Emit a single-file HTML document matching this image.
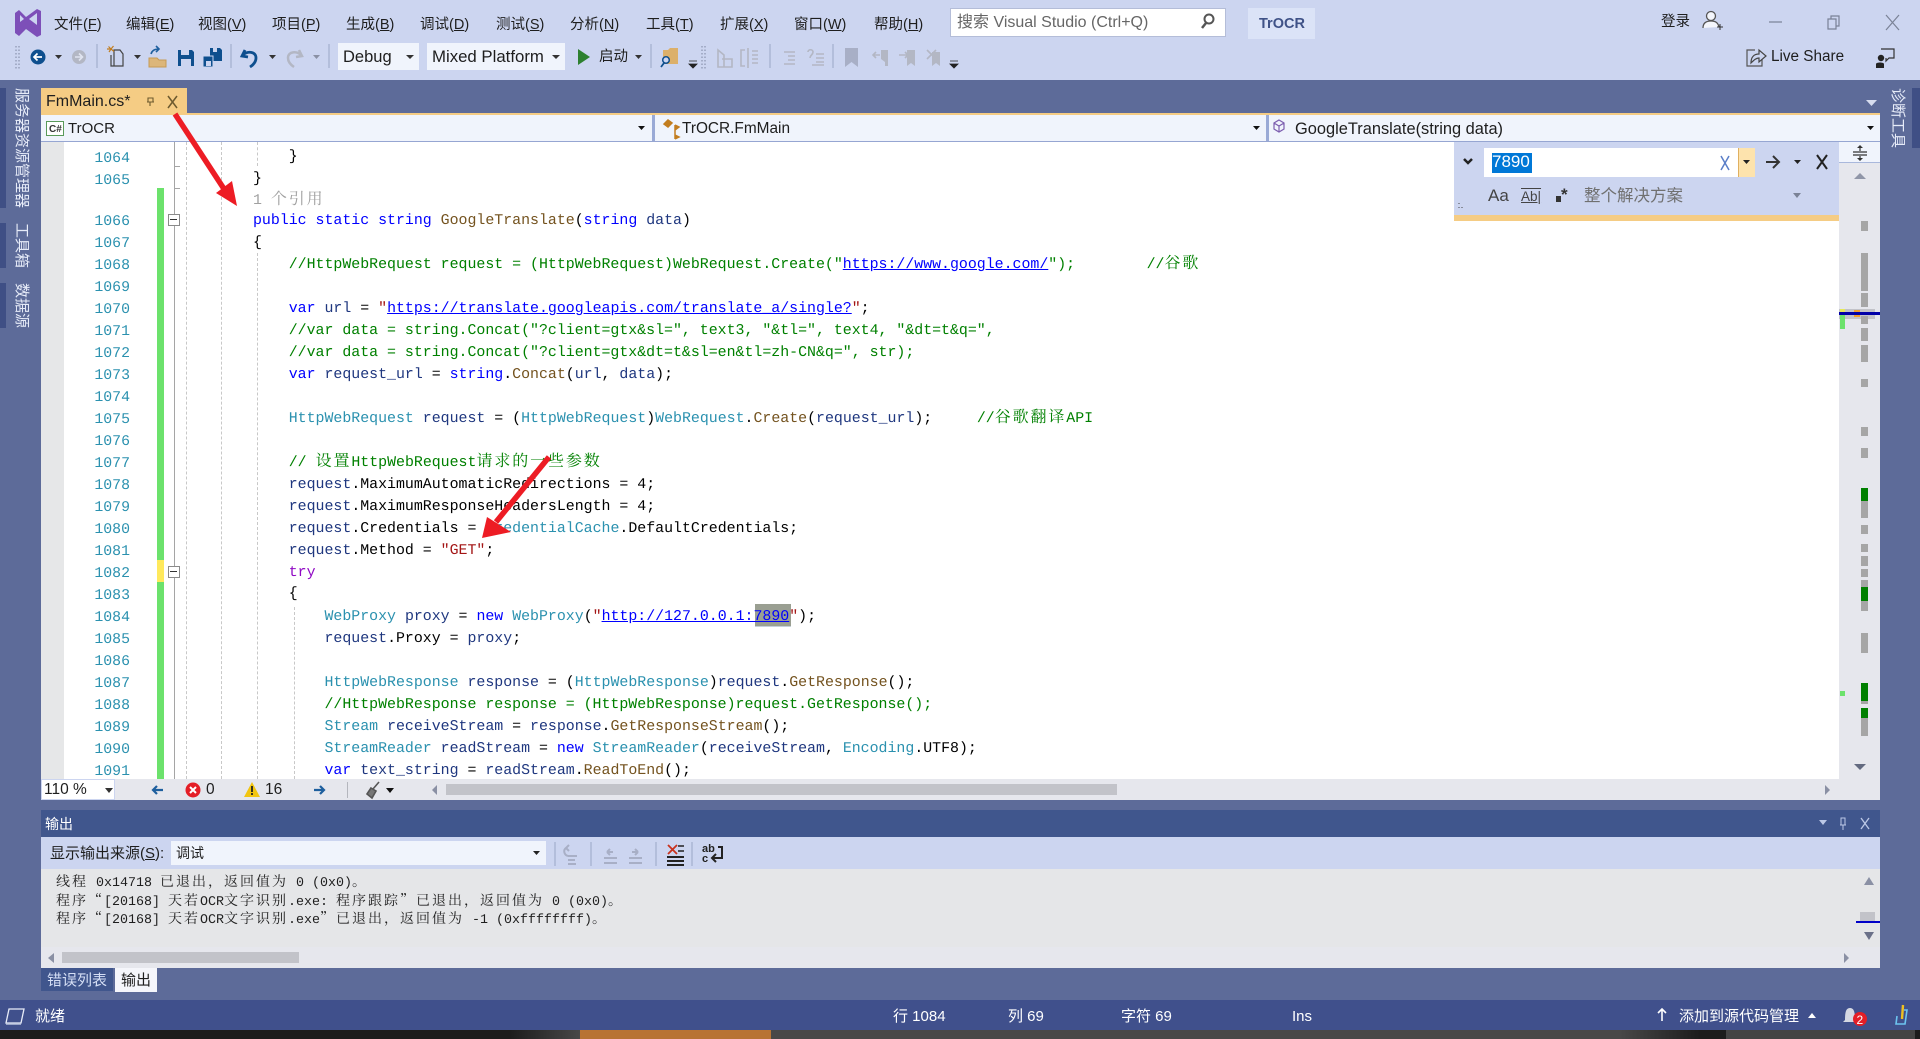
<!DOCTYPE html>
<html lang="zh-CN"><head><meta charset="utf-8"><title>TrOCR</title>
<style>
html,body{margin:0;padding:0;width:1920px;height:1039px;overflow:hidden;background:#5d6b99}
body{position:relative;font-family:"Liberation Sans","Noto Sans CJK SC",sans-serif;font-size:14.5px;color:#1e1e1e}
.a{position:absolute}
.t{position:absolute;white-space:pre;line-height:20px}
u{text-decoration:underline}
#ed{position:absolute;left:64px;top:142px;width:1775px;height:637px;background:#fff;overflow:hidden}
.l{position:absolute;left:189px;margin-top:1px;white-space:pre;line-height:22px;height:22px;font-family:"Liberation Mono","Noto Serif CJK SC",monospace;font-size:14.9px;text-rendering:geometricPrecision;color:#000}
.n{position:absolute;left:30px;margin-top:2px;width:36px;text-align:right;white-space:pre;line-height:22px;font-family:"Liberation Mono",monospace;font-size:14.85px;text-rendering:geometricPrecision;color:#2b91af}
.k{color:#00f}.c{color:#2b91af}.g{color:#008000}.s{color:#a31515}.m{color:#74531f}.p{color:#1f377f}.y{color:#8f08c4}
.h{color:#00f;text-decoration:underline}
.z{font-family:"Noto Serif CJK SC",serif;font-size:16px;letter-spacing:1.88px;line-height:0}
.o{position:absolute;left:56px;white-space:pre;line-height:18px;height:18px;font-family:"Liberation Mono","Noto Serif CJK SC",monospace;font-size:13.33px;text-rendering:geometricPrecision;color:#1e1e1e}
.o b{font-weight:400;font-family:"Noto Serif CJK SC",serif;font-size:14px;letter-spacing:2px;line-height:0}
.st{color:#fff;font-size:15px}
.v{position:absolute;writing-mode:vertical-rl;text-orientation:sideways;color:#e6ebf8;font-size:15px;line-height:20px;white-space:pre}
</style></head><body>
<!-- top chrome -->
<div class="a" style="left:0;top:0;width:1920px;height:80px;background:#ccd5f0"></div>
<!-- menus -->
<span class="t" style="left:54px;top:15px">文件(<u>F</u>)</span>
<span class="t" style="left:126px;top:15px">编辑(<u>E</u>)</span>
<span class="t" style="left:198px;top:15px">视图(<u>V</u>)</span>
<span class="t" style="left:272px;top:15px">项目(<u>P</u>)</span>
<span class="t" style="left:346px;top:15px">生成(<u>B</u>)</span>
<span class="t" style="left:420px;top:15px">调试(<u>D</u>)</span>
<span class="t" style="left:496px;top:15px">测试(<u>S</u>)</span>
<span class="t" style="left:570px;top:15px">分析(<u>N</u>)</span>
<span class="t" style="left:646px;top:15px">工具(<u>T</u>)</span>
<span class="t" style="left:720px;top:15px">扩展(<u>X</u>)</span>
<span class="t" style="left:794px;top:15px">窗口(<u>W</u>)</span>
<span class="t" style="left:874px;top:15px">帮助(<u>H</u>)</span>
<div class="a" style="left:950px;top:8px;width:274px;height:27px;background:#fff;border:1px solid #b4bdd8"></div>
<span class="t" style="left:957px;top:13px;color:#666;font-size:16px">搜索 Visual Studio (Ctrl+Q)</span>
<div class="a" style="left:1248px;top:8px;width:67px;height:31px;background:#dbe3f7"></div>
<span class="t" style="left:1259px;top:14px;font-weight:700;color:#3f5287">TrOCR</span>
<span class="t" style="left:1661px;top:12px">登录</span>
<span class="t" style="left:1771px;top:47px;font-size:15.3px">Live Share</span>
<!-- combos -->
<div class="a" style="left:338px;top:43px;width:81px;height:27px;background:#f0f4fc"></div>
<span class="t" style="left:343px;top:47px;font-size:16.5px">Debug</span>
<div class="a" style="left:427px;top:43px;width:138px;height:27px;background:#f0f4fc"></div>
<span class="t" style="left:432px;top:47px;font-size:16.8px">Mixed Platform</span>
<span class="t" style="left:599px;top:47px">启动</span>
<!-- tab -->
<div class="a" style="left:41px;top:88px;width:146px;height:26px;background:#f5cc84"></div>
<div class="a" style="left:41px;top:113px;width:1839px;height:2px;background:#f5cc84"></div>
<span class="t" style="left:46px;top:92px;font-size:16px">FmMain.cs*</span>
<!-- nav bar -->
<div class="a" style="left:41px;top:115px;width:1839px;height:26px;background:#f0f4fc"></div>
<div class="a" style="left:41px;top:141px;width:1839px;height:1px;background:#96a6d2"></div>
<div class="a" style="left:652px;top:115px;width:3px;height:26px;background:#9aaad6"></div>
<div class="a" style="left:1266px;top:115px;width:3px;height:26px;background:#9aaad6"></div>
<span class="t" style="left:68px;top:119px;font-size:15px">TrOCR</span>
<span class="t" style="left:682px;top:119px;font-size:15.4px">TrOCR.FmMain</span>
<span class="t" style="left:1295px;top:119px;font-size:16.4px">GoogleTranslate(string data)</span>
<!-- side tabs -->
<div class="a" style="left:0;top:88px;width:6px;height:120px;background:#3f4f85"></div>
<div class="a" style="left:0;top:223px;width:6px;height:45px;background:#3f4f85"></div>
<div class="a" style="left:0;top:283px;width:6px;height:45px;background:#3f4f85"></div>
<span class="v" style="left:11px;top:88px">服务器资源管理器</span>
<span class="v" style="left:11px;top:223px">工具箱</span>
<span class="v" style="left:11px;top:283px">数据源</span>
<div class="a" style="left:1912px;top:88px;width:8px;height:60px;background:#3f4f85"></div>
<span class="v" style="left:1887px;top:88px">诊断工具</span>

<!-- editor margin -->
<div class="a" style="left:41px;top:142px;width:23px;height:637px;background:#e6e7e8"></div>
<div id="ed">
<span class="n" style="top:4px">1064</span>
<span class="n" style="top:26px">1065</span>
<span class="n" style="top:67px">1066</span>
<span class="n" style="top:89px">1067</span>
<span class="n" style="top:111px">1068</span>
<span class="n" style="top:133px">1069</span>
<span class="n" style="top:155px">1070</span>
<span class="n" style="top:177px">1071</span>
<span class="n" style="top:199px">1072</span>
<span class="n" style="top:221px">1073</span>
<span class="n" style="top:243px">1074</span>
<span class="n" style="top:265px">1075</span>
<span class="n" style="top:287px">1076</span>
<span class="n" style="top:309px">1077</span>
<span class="n" style="top:331px">1078</span>
<span class="n" style="top:353px">1079</span>
<span class="n" style="top:375px">1080</span>
<span class="n" style="top:397px">1081</span>
<span class="n" style="top:419px">1082</span>
<span class="n" style="top:441px">1083</span>
<span class="n" style="top:463px">1084</span>
<span class="n" style="top:485px">1085</span>
<span class="n" style="top:507px">1086</span>
<span class="n" style="top:529px">1087</span>
<span class="n" style="top:551px">1088</span>
<span class="n" style="top:573px">1089</span>
<span class="n" style="top:595px">1090</span>
<span class="n" style="top:617px">1091</span>
<div class="a" style="left:691px;top:462px;width:36px;height:22px;background:#9a9f92;border-bottom:1px solid #c4d0d8"></div>
<div class="l" style="top:3px">    }</div>
<div class="l" style="top:25px">}</div>
<div class="l" style="top:47px;color:#a0a0a0">1 <span class="z">个引用</span></div>
<div class="l" style="top:67px"><span class="k">public static string</span> <span class="m">GoogleTranslate</span>(<span class="k">string</span> <span class="p">data</span>)</div>
<div class="l" style="top:89px">{</div>
<div class="l g" style="top:111px">    //HttpWebRequest request = (HttpWebRequest)WebRequest.Create("<span class="h">https://www.google.com/</span>");        //<span class="z">谷歌</span></div>
<div class="l" style="top:155px">    <span class="k">var</span> <span class="p">url</span> = <span class="s">"</span><span class="h">https://translate.googleapis.com/translate_a/single?</span><span class="s">"</span>;</div>
<div class="l g" style="top:177px">    //var data = string.Concat("?client=gtx&amp;sl=", text3, "&amp;tl=", text4, "&amp;dt=t&amp;q=",</div>
<div class="l g" style="top:199px">    //var data = string.Concat("?client=gtx&amp;dt=t&amp;sl=en&amp;tl=zh-CN&amp;q=", str);</div>
<div class="l" style="top:221px">    <span class="k">var</span> <span class="p">request_url</span> = <span class="k">string</span>.<span class="m">Concat</span>(<span class="p">url</span>, <span class="p">data</span>);</div>
<div class="l" style="top:265px">    <span class="c">HttpWebRequest</span> <span class="p">request</span> = (<span class="c">HttpWebRequest</span>)<span class="c">WebRequest</span>.<span class="m">Create</span>(<span class="p">request_url</span>);     <span class="g">//<span class="z">谷歌翻译</span>API</span></div>
<div class="l g" style="top:309px">    // <span class="z">设置</span>HttpWebRequest<span class="z">请求的一些参数</span></div>
<div class="l" style="top:331px">    <span class="p">request</span>.MaximumAutomaticRedirections = 4;</div>
<div class="l" style="top:353px">    <span class="p">request</span>.MaximumResponseHeadersLength = 4;</div>
<div class="l" style="top:375px">    <span class="p">request</span>.Credentials = <span class="c">CredentialCache</span>.DefaultCredentials;</div>
<div class="l" style="top:397px">    <span class="p">request</span>.Method = <span class="s">"GET"</span>;</div>
<div class="l" style="top:419px">    <span class="y">try</span></div>
<div class="l" style="top:440px">    {</div>
<div class="l" style="top:463px">        <span class="c">WebProxy</span> <span class="p">proxy</span> = <span class="k">new</span> <span class="c">WebProxy</span>(<span class="s">"</span><span class="h">http://127.0.0.1:7890</span><span class="s">"</span>);</div>
<div class="l" style="top:485px">        <span class="p">request</span>.Proxy = <span class="p">proxy</span>;</div>
<div class="l" style="top:529px">        <span class="c">HttpWebResponse</span> <span class="p">response</span> = (<span class="c">HttpWebResponse</span>)<span class="p">request</span>.<span class="m">GetResponse</span>();</div>
<div class="l g" style="top:551px">        //HttpWebResponse response = (HttpWebResponse)request.GetResponse();</div>
<div class="l" style="top:573px">        <span class="c">Stream</span> <span class="p">receiveStream</span> = <span class="p">response</span>.<span class="m">GetResponseStream</span>();</div>
<div class="l" style="top:595px">        <span class="c">StreamReader</span> <span class="p">readStream</span> = <span class="k">new</span> <span class="c">StreamReader</span>(<span class="p">receiveStream</span>, <span class="c">Encoding</span>.UTF8);</div>
<div class="l" style="top:617px">        <span class="k">var</span> <span class="p">text_string</span> = <span class="p">readStream</span>.<span class="m">ReadToEnd</span>();</div>
</div>
<!-- change bar -->
<div class="a" style="left:157px;top:188px;width:7px;height:591px;background:#6ce26c"></div>
<div class="a" style="left:157px;top:560px;width:7px;height:22px;background:#ffe95c"></div>
<div class="a" style="left:174px;top:142px;width:1px;height:637px;background:#a5a5a5"></div>
<div class="a" style="left:174px;top:166px;width:6px;height:1px;background:#a5a5a5"></div>
<div class="a" style="left:174px;top:188px;width:6px;height:1px;background:#a5a5a5"></div>
<div class="a" style="left:168px;top:214px;width:10px;height:10px;background:#fff;border:1px solid #8a8a8a"></div>
<div class="a" style="left:170px;top:219px;width:7px;height:1px;background:#333"></div>
<div class="a" style="left:168px;top:566px;width:10px;height:10px;background:#fff;border:1px solid #8a8a8a"></div>
<div class="a" style="left:170px;top:571px;width:7px;height:1px;background:#333"></div>
<!-- indent guides -->
<div class="a" style="left:186px;top:142px;height:637px;border-left:1px dashed #c8c8c8"></div>
<div class="a" style="left:221px;top:142px;height:637px;border-left:1px dashed #c8c8c8"></div>
<div class="a" style="left:257px;top:142px;height:24px;border-left:1px dashed #c8c8c8"></div>
<div class="a" style="left:257px;top:253px;height:526px;border-left:1px dashed #c8c8c8"></div>
<div class="a" style="left:294px;top:607px;height:172px;border-left:1px dashed #c8c8c8"></div>

<!-- find panel -->
<div class="a" style="left:1454px;top:142px;width:385px;height:73px;background:#ccd5f0"></div>
<div class="a" style="left:1454px;top:215px;width:385px;height:6px;background:#f5cc84"></div>
<div class="a" style="left:1484px;top:148px;width:254px;height:29px;background:#fff"></div>
<div class="a" style="left:1738px;top:148px;width:17px;height:29px;background:#fde3ad;border-left:1px solid #e0b060;box-sizing:border-box"></div>
<div class="a" style="left:1492px;top:153px;width:40px;height:20px;background:#0078d7"></div>
<span class="t" style="left:1492px;top:152px;color:#fff;font-size:17px">7890</span>
<span class="t" style="left:1584px;top:186px;color:#707070;font-size:16.5px">整个解决方案</span>
<span class="t" style="left:1488px;top:186px;color:#444;font-size:17px">Aa</span>
<span class="t" style="left:1521px;top:187px;color:#444;font-size:13.5px;text-decoration:underline overline">Ab|</span>

<!-- scrollbar -->
<div class="a" style="left:1839px;top:142px;width:41px;height:637px;background:#e6e7ed"></div>
<div class="a" style="left:1839px;top:142px;width:41px;height:21px;background:#f0f4fc;border-bottom:1px solid #a9b8dc;box-sizing:border-box"></div>
<div class="a" style="left:1839px;top:309px;width:36px;height:10px;background:#c2c3c9"></div>
<div class="a" style="left:1861px;top:221px;width:7px;height:10px;background:#a6a6a6"></div>
<div class="a" style="left:1861px;top:253px;width:7px;height:38px;background:#a6a6a6"></div>
<div class="a" style="left:1861px;top:293px;width:7px;height:14px;background:#a6a6a6"></div>
<div class="a" style="left:1861px;top:316px;width:7px;height:8px;background:#a6a6a6"></div>
<div class="a" style="left:1861px;top:328px;width:7px;height:13px;background:#a6a6a6"></div>
<div class="a" style="left:1861px;top:345px;width:7px;height:17px;background:#a6a6a6"></div>
<div class="a" style="left:1861px;top:379px;width:7px;height:8px;background:#a6a6a6"></div>
<div class="a" style="left:1861px;top:427px;width:7px;height:9px;background:#a6a6a6"></div>
<div class="a" style="left:1861px;top:448px;width:7px;height:10px;background:#a6a6a6"></div>
<div class="a" style="left:1861px;top:488px;width:7px;height:13px;background:#008000"></div>
<div class="a" style="left:1861px;top:501px;width:7px;height:17px;background:#a6a6a6"></div>
<div class="a" style="left:1861px;top:525px;width:7px;height:9px;background:#a6a6a6"></div>
<div class="a" style="left:1861px;top:544px;width:7px;height:8px;background:#a6a6a6"></div>
<div class="a" style="left:1861px;top:556px;width:7px;height:10px;background:#a6a6a6"></div>
<div class="a" style="left:1861px;top:569px;width:7px;height:8px;background:#a6a6a6"></div>
<div class="a" style="left:1861px;top:580px;width:7px;height:31px;background:#a6a6a6"></div>
<div class="a" style="left:1861px;top:587px;width:7px;height:14px;background:#008000"></div>
<div class="a" style="left:1861px;top:633px;width:7px;height:20px;background:#a6a6a6"></div>
<div class="a" style="left:1861px;top:683px;width:7px;height:18px;background:#008000"></div>
<div class="a" style="left:1861px;top:701px;width:7px;height:3px;background:#a6a6a6"></div>
<div class="a" style="left:1861px;top:708px;width:7px;height:10px;background:#008000"></div>
<div class="a" style="left:1861px;top:718px;width:7px;height:18px;background:#a6a6a6"></div>
<div class="a" style="left:1840px;top:309px;width:5px;height:20px;background:#6ce26c"></div>
<div class="a" style="left:1840px;top:309px;width:5px;height:3px;background:#e6e95c"></div>
<div class="a" style="left:1840px;top:691px;width:5px;height:5px;background:#6ce26c"></div>
<div class="a" style="left:1854px;top:310px;width:6px;height:7px;background:#f0a030"></div>
<div class="a" style="left:1839px;top:312px;width:41px;height:3px;background:#0000a8"></div>

<!-- editor bottom -->
<div class="a" style="left:41px;top:779px;width:1839px;height:21px;background:#e6e7ed"></div>
<div class="a" style="left:41px;top:779px;width:74px;height:21px;background:#fff;border:1px solid #ccd5f0;box-sizing:border-box"></div>
<span class="t" style="left:44px;top:780px;font-size:15.5px">110 %</span>
<span class="t" style="left:206px;top:780px;font-size:15.5px">0</span>
<span class="t" style="left:265px;top:780px;font-size:15.5px">16</span>
<div class="a" style="left:347px;top:782px;width:1px;height:16px;background:#b4b6bd"></div>
<div class="a" style="left:446px;top:784px;width:671px;height:11px;background:#c2c3c9"></div>

<!-- output -->
<div class="a" style="left:41px;top:810px;width:1839px;height:27px;background:#40568d"></div>
<span class="t" style="left:45px;top:814px;color:#fff;font-size:14px">输出</span>
<div class="a" style="left:41px;top:837px;width:1839px;height:32px;background:#ccd5f0"></div>
<span class="t" style="left:50px;top:844px;font-size:15px">显示输出来源(<u>S</u>):</span>
<div class="a" style="left:171px;top:841px;width:375px;height:24px;background:#f0f4fc"></div>
<span class="t" style="left:176px;top:843px;font-size:14px">调试</span>
<div class="a" style="left:41px;top:869px;width:1839px;height:99px;background:#e5e6e8"></div>
<div class="a" style="left:41px;top:947px;width:1839px;height:21px;background:#e6e7ed"></div>
<div class="o" style="top:875px"><b>线程</b> 0x14718 <b>已退出，返回值为</b> 0 (0x0)<b>。</b></div>
<div class="o" style="top:894px"><b>程序“</b>[20168] <b>天若</b>OCR<b>文字识别</b>.exe: <b>程序跟踪”已退出，返回值为</b> 0 (0x0)<b>。</b></div>
<div class="o" style="top:912px"><b>程序“</b>[20168] <b>天若</b>OCR<b>文字识别</b>.exe<b>”已退出，返回值为</b> -1 (0xffffffff)<b>。</b></div>
<div class="a" style="left:62px;top:952px;width:237px;height:11px;background:#c2c3c9"></div>
<div class="a" style="left:1860px;top:912px;width:15px;height:9px;background:#c2c3c9"></div>
<div class="a" style="left:1856px;top:921px;width:24px;height:2px;background:#0000c8"></div>
<div class="a" style="left:41px;top:968px;width:72px;height:23px;background:#40568d"></div>
<span class="t" style="left:47px;top:971px;color:#d5dff5;font-size:15px">错误列表</span>
<div class="a" style="left:115px;top:968px;width:42px;height:24px;background:#f5f6fb"></div>
<span class="t" style="left:121px;top:971px;font-size:15px">输出</span>

<!-- status bar -->
<div class="a" style="left:0;top:1000px;width:1920px;height:30px;background:#40508c"></div>
<span class="t st" style="left:35px;top:1007px">就绪</span>
<span class="t st" style="left:893px;top:1007px">行 1084</span>
<span class="t st" style="left:1008px;top:1007px">列 69</span>
<span class="t st" style="left:1121px;top:1007px">字符 69</span>
<span class="t st" style="left:1292px;top:1007px">Ins</span>
<span class="t st" style="left:1679px;top:1007px;font-size:15px">添加到源代码管理</span>
<!-- taskbar -->
<div class="a" style="left:0;top:1030px;width:1920px;height:9px;background:linear-gradient(90deg,#1c1c1c 0,#1c1c1c 510px,#484848 580px,#484848 1620px,#1c1c1c 1700px,#1c1c1c 1726px,#444 1726px,#444 1915px,#1c1c1c 1915px)"></div>
<div class="a" style="left:580px;top:1030px;width:191px;height:9px;background:#b87333"></div>

<!-- icons -->
<svg class="a" style="left:0;top:0" width="1920" height="1039" viewBox="0 0 1920 1039" fill="none">
<!-- VS logo -->
<path d="M15 28V14l4-3 7 7 11-8 4 2v24l-4 2-11-8-7 7-4-3zm5-5 4-3-4-4zm17 3V14l-8 6z" fill="#7d4fb8" fill-rule="evenodd" transform="translate(0 -1)"/>
<!-- search -->
<circle cx="1209" cy="19" r="4.5" stroke="#555" stroke-width="2"/><path d="M1206 23l-4 5" stroke="#555" stroke-width="2.5"/>
<!-- user -->
<circle cx="1711" cy="16" r="4.500" stroke="#555" stroke-width="1.300" fill="#f4f6fc"/><path d="M1703 28c0-5 3-7 8-7s7 2 8 6" stroke="#555" stroke-width="1.300" fill="#f4f6fc"/><path d="M1717 27h6M1720 24v6" stroke="#333"/>
<!-- window -->
<path d="M1769 22h13" stroke="#7a8296" stroke-width="1.200"/>
<path d="M1828 19h8v10h-8zM1831 19v-3h8v10h-3" stroke="#7a8296" stroke-width="1.200"/>
<path d="M1886 15l13 15M1899 15l-13 15" stroke="#7a8296" stroke-width="1.200"/>
<!-- grippers -->
<path d="M16 46v23M19 46v23" stroke="#7d85a0" stroke-dasharray="1.500 2"/>
<path d="M702 46v23M705 46v23" stroke="#7d85a0" stroke-dasharray="1.500 2"/>
<!-- back/forward -->
<circle cx="38" cy="57" r="7.500" fill="#0e4f8e"/><path d="M42 57h-7M37.500 53.500 34 57l3.500 3.500" stroke="#fff" stroke-width="1.700"/>
<path d="M55 55h7l-3.500 4z" fill="#333"/>
<circle cx="79" cy="57" r="7" fill="#b3b7c4"/><path d="M75 57h7M79 53.500l3.500 3.500-3.500 3.500" stroke="#e0e4f0" stroke-width="1.600"/>
<path d="M97 44v24M231 44v24M329 44v24M651 44v24M770 44v24M833 44v24" stroke="#9aa7c6"/>
<!-- new project -->
<path d="M114 50h6l3 4v12h-9zM111 55v11h3" stroke="#444" stroke-width="1.200"/><path d="M111 49l-2.500-2.500M111 49l2.500-3M111 49h-4M111 49l-2 3M111 49l3 2.500" stroke="#c27d1f" stroke-width="1.200"/>
<path d="M134 55h7l-3.500 4z" fill="#333"/>
<!-- open -->
<path d="M149 58h8l2 2h7v7h-17z" fill="#dcb67a" stroke="#c69a55"/><path d="M151 54c1-4 4-5 8-5M156 46l3 3-3 3" stroke="#1e5f9e" stroke-width="1.600"/>
<!-- save -->
<path d="M178 50h14l2 2v14h-16z" fill="#0e4f8e"/><path d="M181 50h8v5h-8zM181 59h10v7h-10z" fill="#ccd5f0"/>
<path d="M210 48h10l2 2v11h-12z" fill="#0e4f8e"/><path d="M203 56h10v11h-10z" fill="#0e4f8e" stroke="#ccd5f0"/><path d="M213 48h4v4h-4zM206 61h5v5h-5z" fill="#ccd5f0"/>
<!-- undo/redo -->
<path d="M245 50l-3 6 6 1M243 55c4-4 13-4 13 3 0 4-3 7-6 9" stroke="#0e4f8e" stroke-width="2.800"/>
<path d="M269 55h7l-3.500 4z" fill="#333"/>
<path d="M299 50l3 6-6 1M301 55c-4-4-13-4-13 3 0 4 3 7 6 9" stroke="#b3b7c4" stroke-width="2.500"/>
<path d="M313 55h7l-3.500 4z" fill="#8a90a4"/>
<path d="M406 55h8l-4 4z" fill="#333"/><path d="M552 55h8l-4 4z" fill="#333"/>
<!-- play -->
<path d="M578 49l12 8-12 8z" fill="#2d8030"/>
<path d="M635 55h7l-3.500 4z" fill="#333"/>
<!-- find folder -->
<path d="M663 50h5l2-2h8v16h-15z" fill="#dcb06a"/><circle cx="666" cy="60" r="3.300" fill="#ccd5f0" stroke="#0e4f8e" stroke-width="1.500"/><path d="M664 63l-3 4" stroke="#0e4f8e" stroke-width="1.800"/>
<path d="M689 61h8M689 64h8l-4 4z" fill="#222" stroke="#222" stroke-width=".8"/>
<!-- disabled toolbar -->
<g stroke="#b3b7c4" stroke-width="1.600">
<path d="M718 50l6 5v12h-6zM722 59h10v8h-8"/>
<path d="M745 50h-4v16h4M748 48v20M752 51h6M752 55h6M752 59h6M752 63h6"/>
<path d="M784 52h11M788 56h7M788 60h7M784 64h11"/>
<path d="M808 52c0-3 5-3 5 0s-3 3-3 6M816 54h8M816 58h8M816 62h8M812 65h12"/>
<path d="M881 50v9l4 3v4h3V50z" fill="#b3b7c4" stroke="none"/><path d="M876 52l-3 3 3 3M873 55h7"/>
<path d="M907 66l4-3 4 3V50h-8z" fill="#b3b7c4" stroke="none"/><path d="M899 55h9M905 52l3 3-3 3"/>
<path d="M932 66l4-3 4 3V52h-8z" fill="#b3b7c4" stroke="none"/><path d="M927 50l9 9M936 50l-9 9"/>
</g>
<path d="M845 48h13v19l-6.500-5-6.500 5z" fill="#a8afc6"/>
<path d="M950 61h8M950 64h8l-4 4z" fill="#222" stroke="#222" stroke-width=".8"/>
<!-- live share -->
<path d="M1755 50h-8v16h15v-7" stroke="#555" stroke-width="1.200"/><path d="M1751 63c0-6 3-9 8-9v-4l7 6-7 6v-4c-3 0-5 2-8 5z" stroke="#444" stroke-width="1.200"/>
<!-- feedback -->
<path d="M1881 49h13v9h-5l-3 3v-3" stroke="#333" stroke-width="1.200"/><circle cx="1881" cy="58" r="3.200" fill="#222"/><path d="M1876 68v-4c0-2 8-2 8 0v4z" fill="#222"/>
<!-- tab icons -->
<path d="M148 98h5v4h-5zM147 102h7M150 102v4" stroke="#6d5a2e" stroke-width="1.100"/>
<path d="M168 96l9 12M177 96l-9 12" stroke="#6d5a2e" stroke-width="1.500"/>
<path d="M1866 100h11l-5.500 6z" fill="#d7ddef"/>
<!-- nav icons -->
<rect x="46.500" y="121.500" width="17" height="14" fill="#fff" stroke="#5a9a5a"/><text x="49" y="132" font-size="10" font-family="Liberation Sans" font-weight="700" fill="#333">C#</text>
<path d="M638 126h7l-3.500 4zM1253 126h7l-3.500 4zM1867 126h7l-3.500 4z" fill="#111"/>
<path d="M668 120l4 3-4 4-4-3zM675 125v14M675 125l4 2-4 3M675 135l4 2-4 2" fill="#c27d1f" stroke="#c27d1f" stroke-width="1.500"/>
<path d="M1279 120l5 3v6l-5 3-5-3v-6zM1274 123l5 3 5-3M1279 126v6" stroke="#7d5fb0" stroke-width="1.200"/>
<!-- find panel icons -->
<path d="M1464 159l4 4 4-4" stroke="#222" stroke-width="2.500"/>
<path d="M1721 156l8 14M1729 156l-8 14" stroke="#5a7ec8" stroke-width="1.500"/>
<path d="M1743 160h7l-3.500 4z" fill="#222"/>
<path d="M1766 162h12M1773 156l6 6-6 6" stroke="#333" stroke-width="2"/>
<path d="M1794 160h7l-3.500 4z" fill="#222"/>
<path d="M1817 155l10 14M1827 155l-10 14" stroke="#222" stroke-width="2"/>
<path d="M1556 196h5v6h-5z" fill="#333"/><text x="1561" y="200" font-size="17" font-family="Liberation Sans" font-weight="700" fill="#333">*</text>
<path d="M1793 193h8l-4 5z" fill="#7a8296"/>
<path d="M1459 203v1M1459 207v1M1462 207v1" stroke="#444"/>
<!-- scroll arrows -->
<path d="M1853 152h14M1860 147v4M1853 155h14M1860 156v4" stroke="#333" stroke-width="1.200"/><path d="M1857 148l3-3 3 3zM1857 158l3 3 3-3z" fill="#333"/>
<path d="M1854 179h12l-6-6z" fill="#9096a8"/><path d="M1854 764h12l-6 6z" fill="#636a80"/>
<path d="M437 785v10l-5-5z" fill="#8a90a4"/><path d="M1825 785v10l5-5z" fill="#8a90a4"/>
<!-- bottom bar icons -->
<path d="M105 788h8l-4 5z" fill="#333"/>
<path d="M163 790h-10M157 786l-4 4 4 4" stroke="#1e5f9e" stroke-width="2.200"/>
<circle cx="193" cy="790" r="7.500" fill="#e41e26"/><path d="M190 787l6 6M196 787l-6 6" stroke="#fff" stroke-width="2"/>
<path d="M252 782l8 15h-16z" fill="#f2c511"/><path d="M252 786v6M252 793v2" stroke="#222" stroke-width="1.800"/>
<path d="M314 790h10M320 786l4 4-4 4" stroke="#1e5f9e" stroke-width="2.200"/>
<path d="M379 782l-6 7M371 788l5 3-4 7-5-4z" stroke="#555" stroke-width="1.600" fill="#777"/>
<path d="M386 788h8l-4 5z" fill="#111"/>
<!-- output header icons -->
<path d="M1819 820h8l-4 5z" fill="#bcc8e6"/>
<path d="M1841 818h4v7h-4zM1843 825v5M1840 825h6" stroke="#bcc8e6"/>
<path d="M1861 818l8 11M1869 818l-8 11" stroke="#bcc8e6" stroke-width="1.300"/>
<!-- output toolbar -->
<path d="M533 851h7l-3.500 4z" fill="#222"/>
<path d="M555 842v24M591 842v24M656 842v24M692 842v24" stroke="#9aa7c6"/>
<g stroke="#a8afc6" stroke-width="2">
<path d="M566 848c-3 2-2 7 2 8M569 845l-3 3 3 3M568 856h9M568 860h7M568 864h8"/>
<path d="M613 852l-6 0M607 852l3-3M607 852l3 3M604 858h13M604 863h13"/>
<path d="M632 852h6M638 852l-3-3M638 852l-3 3M629 858h13M629 863h13"/>
</g>
<path d="M668 845l9 9M677 845l-9 9" stroke="#c8321e" stroke-width="1.800"/>
<path d="M667 857h17M667 861h17M667 865h17" stroke="#222" stroke-width="2"/><path d="M678 846h6M678 851h6" stroke="#222" stroke-width="1.600"/>
<text x="702" y="852" font-size="11" font-family="Liberation Sans" font-weight="700" fill="#222">ab</text><text x="702" y="862" font-size="11" font-family="Liberation Sans" font-weight="700" fill="#222">c</text>
<path d="M718 847h4v11h-10M716 854l-4 4 4 4" stroke="#222" stroke-width="2"/>
<!-- output scrolls -->
<path d="M54 953v10l-6-5z" fill="#8a90a4"/><path d="M1844 953v10l5-5z" fill="#8a90a4"/>
<path d="M1864 885h10l-5-8z" fill="#8a90a4"/><path d="M1864 932h10l-5 8z" fill="#6a7088"/>
<!-- status icons -->
<path d="M9 1009h15l-3 14H6z" stroke="#e8ecf8" stroke-width="1.300"/><path d="M6 1024h15" stroke="#b8c2dc" stroke-width="1.500"/>
<path d="M1662 1021v-12M1658 1013l4-4 4 4" stroke="#fff" stroke-width="1.600"/>
<path d="M1808 1018l4-5 4 5z" fill="#fff"/>
<path d="M1845 1020c0-8 1-12 5-12s5 4 5 12l2 2h-14z" fill="#d5d8e2"/>
<circle cx="1860" cy="1019" r="7" fill="#e41e26"/><text x="1856.500" y="1024" font-size="12" font-family="Liberation Sans" fill="#fff">2</text>
<path d="M1897 1016l-1 8h9l2-14h-3" stroke="#6cc4f0" stroke-width="1.600"/><path d="M1903 1005l-1 14" stroke="#f0c020" stroke-width="2.400"/>
<!-- red arrows -->
<path d="M175 114L226 192" stroke="#ed1c24" stroke-width="5.500"/>
<path d="M237 206L216 193L232 181z" fill="#ed1c24"/>
<path d="M549 457L496 522" stroke="#ed1c24" stroke-width="5.500"/>
<path d="M482 538L487 517L511 532z" fill="#ed1c24"/>
</svg>
</body></html>
